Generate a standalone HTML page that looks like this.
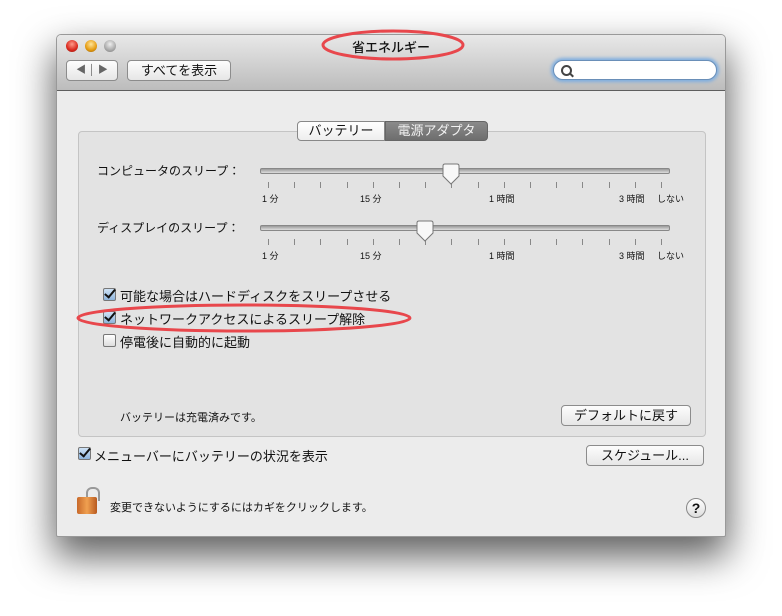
<!DOCTYPE html>
<html><head><meta charset="utf-8"><style>
body{margin:0;width:782px;height:616px;background:#fff;position:relative;overflow:hidden;font-family:"Liberation Sans","Noto Sans CJK JP",sans-serif;font-size:12px;color:#111}
.a{position:absolute}
.win{left:56px;top:34px;width:670px;height:503px;background:#ececec;border-radius:5px 5px 2px 2px;box-shadow:0 18px 38px 2px rgba(0,0,0,.62);overflow:hidden;border:1px solid #999;box-sizing:border-box}
.tb{left:0;top:0;width:100%;height:55px;background:linear-gradient(#e8e8e8,#bcbcbc);border-bottom:1px solid #5e5e5e}
.light{width:12px;height:12px;border-radius:50%;top:5px}
.btn{background:linear-gradient(#fdfdfd,#e6e6e6);border:1px solid #8c8c8c;border-radius:4px;box-sizing:border-box;text-align:center;font-size:13px}
.cb{width:13px;height:13px;border:1px solid #777;border-radius:2px;background:linear-gradient(#fff,#ddd);box-sizing:border-box}
.chk{background:linear-gradient(#cfe2f5,#8db4dc)}
.chk:after{content:"";position:absolute;left:3px;top:-2px;width:4px;height:9px;border:solid #111;border-width:0 2.5px 2.5px 0;transform:rotate(40deg)}
.track{height:4px;border-radius:2px;background:linear-gradient(#999,#ddd);border:1px solid #888}
.tick{width:1px;height:6px;background:#888;top:182px}
.lbl{font-size:9px;top:192px}
</style></head><body>
<div class="a win">
 <div class="a tb"></div>
 <div class="a light" style="left:9px;background:radial-gradient(circle at 50% 35%,#ff9a8a,#d9281d 60%,#8e1a10)"></div>
 <div class="a light" style="left:28px;background:radial-gradient(circle at 50% 35%,#ffe59a,#e59b10 60%,#8e5a0a)"></div>
 <div class="a light" style="left:47px;background:radial-gradient(circle at 50% 35%,#eee,#aaa 60%,#777)"></div>
 <div class="a" style="left:0;width:100%;top:2px;text-align:center;font-size:13px;font-weight:500">省エネルギー</div>
 <div class="a btn" style="left:9px;top:25px;width:52px;height:21px;font-size:10px;color:#666;line-height:19px">◀ │ ▶</div>
 <div class="a btn" style="left:70px;top:25px;width:104px;height:21px;line-height:19px">すべてを表示</div>
 <div class="a" style="left:496px;top:25px;width:164px;height:20px;border-radius:10px;background:#fff;border:1px solid #6a8fb8;box-shadow:0 0 3px 2px #7eaee0;box-sizing:border-box"></div>
 <div class="a" style="left:504px;top:30px;width:7px;height:7px;border:2px solid #444;border-radius:50%"></div>
 <div class="a" style="left:512px;top:39px;width:5px;height:2px;background:#444;transform:rotate(45deg)"></div>
 <div class="a" style="left:21px;top:96px;width:628px;height:306px;background:#e3e3e3;border:1px solid #c4c4c4;border-radius:4px;box-sizing:border-box"></div>
 <div class="a" style="left:240px;top:86px;width:88px;height:20px;background:linear-gradient(#fff,#eee);border:1px solid #888;border-radius:4px 0 0 4px;box-sizing:border-box;text-align:center;line-height:18px;font-size:13px">バッテリー</div>
 <div class="a" style="left:328px;top:86px;width:103px;height:20px;background:linear-gradient(#8a8a8a,#6e6e6e);border:1px solid #666;border-radius:0 4px 4px 0;box-sizing:border-box;text-align:center;line-height:18px;font-size:13px;color:#f2f2f2">電源アダプタ</div>
</div>
<div class="a" style="left:97px;top:162px;font-size:12px">コンピュータのスリープ：</div>
<div class="a track" style="left:260px;top:168px;width:408px"></div>
<div class="a" style="left:97px;top:219px;font-size:12px">ディスプレイのスリープ：</div>
<div class="a track" style="left:260px;top:225px;width:408px"></div>
<div id="t"></div>
<svg class="a" style="left:441px;top:163px" width="20" height="24"><path d="M2 3Q2 1 4 1H16Q18 1 18 3V13L10 21L2 13Z" fill="#f8f8f8" stroke="#777"/></svg>
<svg class="a" style="left:415px;top:220px" width="20" height="24"><path d="M2 3Q2 1 4 1H16Q18 1 18 3V13L10 21L2 13Z" fill="#f8f8f8" stroke="#777"/></svg>
<script>
let h='';for(const o of [0,57]){for(let i=0;i<16;i++)h+=`<div class="a tick" style="left:${268+i*26.2}px;top:${182+o}px"></div>`;
[[262,'1 分'],[360,'15 分'],[489,'1 時間'],[619,'3 時間'],[657,'しない']].forEach(([x,s])=>h+=`<div class="a lbl" style="left:${x}px;top:${192+o}px">${s}</div>`);}
document.getElementById('t').outerHTML=h;
</script>
<div class="a cb chk" style="left:103px;top:288px"></div><div class="a" style="left:120px;top:286px;font-size:13px">可能な場合はハードディスクをスリープさせる</div>
<div class="a cb chk" style="left:103px;top:311px"></div><div class="a" style="left:120px;top:309px;font-size:13px">ネットワークアクセスによるスリープ解除</div>
<div class="a cb" style="left:103px;top:334px"></div><div class="a" style="left:120px;top:332px;font-size:13px">停電後に自動的に起動</div>
<div class="a" style="left:120px;top:409px;font-size:11px">バッテリーは充電済みです。</div>
<div class="a btn" style="left:561px;top:405px;width:130px;height:21px;line-height:19px">デフォルトに戻す</div>
<div class="a cb chk" style="left:78px;top:447px"></div><div class="a" style="left:94px;top:446px;font-size:13px">メニューバーにバッテリーの状況を表示</div>
<div class="a btn" style="left:586px;top:445px;width:118px;height:21px;line-height:19px">スケジュール...</div>
<div class="a" style="left:86px;top:487px;width:10px;height:12px;border:2px solid #999;border-bottom:none;border-radius:6px 6px 0 0"></div>
<div class="a" style="left:77px;top:497px;width:20px;height:17px;background:linear-gradient(90deg,#c8692a,#f0a050,#b85a20);border-radius:2px"></div>
<div class="a" style="left:110px;top:499px;font-size:11px">変更できないようにするにはカギをクリックします。</div>
<div class="a" style="left:686px;top:498px;width:20px;height:20px;border-radius:50%;border:1px solid #888;background:linear-gradient(#fff,#ddd);box-sizing:border-box;text-align:center;font-size:14px;line-height:18px;font-weight:bold">?</div>
<svg class="a" style="left:0;top:0" width="782" height="616"><ellipse cx="393" cy="45" rx="70" ry="14" fill="none" stroke="#e8474c" stroke-width="3"/><ellipse cx="244" cy="318" rx="166" ry="13" fill="none" stroke="#e8474c" stroke-width="3"/></svg>
</body></html>
